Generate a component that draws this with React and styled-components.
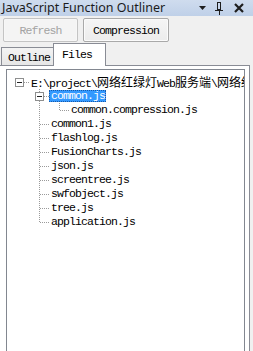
import React from 'react';
import styled, { createGlobalStyle } from 'styled-components';

const MONO = `"Liberation Mono", "Noto Sans CJK SC", monospace`;

const GlobalStyle = createGlobalStyle`
  html, body {
    margin: 0;
    padding: 0;
  }
  body {
    background: #f0f0f0;
    overflow: hidden;
  }
  * {
    box-sizing: border-box;
  }
`;

const Window = styled.div`
  width: 253px;
  height: 351px;
  display: flex;
  flex-direction: column;
  background: #f0f0f0;
  overflow: hidden;
`;

const TitleBar = styled.div`
  height: 16px;
  flex: none;
  display: flex;
  align-items: center;
  padding-left: 2px;
  background: linear-gradient(#cfdcee, #bfd0e8);
  font-family: "Noto Sans", "Open Sans", sans-serif;
  font-size: 12.5px;
  color: #1b1b1b;
`;

const Title = styled.span`
  flex: 1;
  white-space: nowrap;
  line-height: 16px;
`;

const TitleIcons = styled.div`
  display: flex;
  margin-right: 4px;
`;

const TitleIcon = styled.span`
  width: ${(p) => p.$w}px;
  height: 16px;
  display: flex;
  align-items: center;
  justify-content: center;
`;

const Toolbar = styled.div`
  display: flex;
  gap: 5px;
  padding: 2px 3px 0;
  flex: none;
`;

const ToolButton = styled.button`
  width: ${(p) => p.$w}px;
  height: 24px;
  padding: 0;
  border-radius: 2px;
  font-family: ${MONO};
  font-size: 11.5px;
  letter-spacing: -0.9px;
  border: 1px solid ${(p) => (p.disabled ? '#c4c4c4' : '#a9a9a9')};
  background: ${(p) => (p.disabled ? '#f4f4f4' : 'linear-gradient(#f5f5f5, #ececec)')};
  color: ${(p) => (p.disabled ? '#a3a3a3' : '#000')};
  box-shadow: inset 0 0 0 1px ${(p) => (p.disabled ? '#f7f7f7' : '#fbfbfb')};
`;

const TabRow = styled.div`
  display: flex;
  align-items: flex-end;
  height: 23px;
  margin-top: 1px;
  margin-bottom: -1px;
  padding-left: 1px;
  position: relative;
  z-index: 1;
  flex: none;
`;

const Tab = styled.div`
  width: 53px;
  height: ${(p) => (p.$active ? 23 : 18)}px;
  margin-bottom: ${(p) => (p.$active ? 0 : 1)}px;
  margin-left: ${(p) => (p.$active ? -1 : 0)}px;
  padding: ${(p) => (p.$active ? '5px 0 0 8px' : '4px 0 0 6px')};
  border: 1px solid #898c95;
  border-bottom: none;
  background: ${(p) => (p.$active ? '#fff' : 'linear-gradient(#f3f3f3, #e6e6e6)')};
  font-family: ${MONO};
  font-size: 11.5px;
  letter-spacing: -0.9px;
  line-height: 12px;
  color: #000;
  white-space: nowrap;
`;

const TabPanel = styled.div`
  flex: 1;
  width: 250px;
  display: flex;
  background: #fff;
  border-top: 1px solid #898c95;
  border-right: 1px solid #898c95;
  padding: 3px 4px 0 6px;
`;

const TreeBox = styled.div`
  flex: 1;
  border: 1px solid #828790;
  border-bottom: none;
  padding: 5px 0 0 2px;
  overflow: hidden;
  background: #fff;
`;

const Row = styled.div`
  display: flex;
  align-items: center;
  height: 14px;
  white-space: nowrap;
`;

const CellSvg = styled.svg`
  flex: none;
  display: block;
`;

const Label = styled.span`
  height: 12px;
  line-height: 12px;
  padding: 0 1px 0 2px;
  font-family: ${MONO};
  font-size: 11.5px;
  letter-spacing: -0.9px;
  color: ${(p) => (p.$selected ? '#fff' : '#000')};
  background: ${(p) => (p.$selected ? '#3399ff' : 'transparent')};
  outline: ${(p) => (p.$selected ? '1px dotted #1a5aa8' : 'none')};
  outline-offset: -1px;
`;

const Cjk = styled.span`
  font-family: "Noto Sans CJK SC", sans-serif;
  font-size: 12px;
  letter-spacing: 0;
`;

const LINE = '#9a9a9a';

// one 20px column of the tree: guide line, connector and +/- box
const Cell = ({ kind, last, box }) => (
  <CellSvg width="20" height="14" shapeRendering="crispEdges">
    {(kind === 'pass' || kind === 'child') && (
      <line
        x1="10.5"
        y1="0"
        x2="10.5"
        y2={kind === 'child' && last ? 8 : 14}
        stroke={LINE}
        strokeDasharray="1 1"
      />
    )}
    {(kind === 'child' || kind === 'root') && (
      <line x1="11" y1="7.5" x2="20" y2="7.5" stroke={LINE} strokeDasharray="1 1" />
    )}
    {box && (
      <g>
        <rect x="6.5" y="3.5" width="8" height="8" fill="#fff" stroke="#8e8f8f" />
        <line x1="8" y1="7.5" x2="13" y2="7.5" stroke="#222" />
      </g>
    )}
  </CellSvg>
);

const renderText = (text) =>
  text.split(/([\u4e00-\u9fff]+)/).map((part, i) =>
    /[\u4e00-\u9fff]/.test(part) ? <Cjk key={i}>{part}</Cjk> : part
  );

const tree = {
  label: 'E:\\project\\网络红绿灯Web服务端\\网络红绿灯Web服务端',
  children: [
    {
      label: 'common.js',
      selected: true,
      children: [{ label: 'common.compression.js' }],
    },
    { label: 'common1.js' },
    { label: 'flashlog.js' },
    { label: 'FusionCharts.js' },
    { label: 'json.js' },
    { label: 'screentree.js' },
    { label: 'swfobject.js' },
    { label: 'tree.js' },
    { label: 'application.js' },
  ],
};

// guides[k] tells whether column k keeps a vertical line running through the row
const flatten = (node, level, guides, last, out) => {
  out.push({ ...node, level, guides, last });
  (node.children || []).forEach((child, i, arr) =>
    flatten(child, level + 1, [...guides, level === 0 ? false : !last], i === arr.length - 1, out)
  );
  return out;
};

const rows = flatten(tree, 0, [], true, []);

const App = () => (
  <>
    <GlobalStyle />
    <Window>
      <TitleBar>
        <Title>JavaScript Function Outliner</Title>
        <TitleIcons>
          <TitleIcon $w={14}>
            <svg width="7" height="4" viewBox="0 0 7 4">
              <polygon points="0,0 7,0 3.5,4" fill="#1e1e1e" />
            </svg>
          </TitleIcon>
          <TitleIcon $w={20}>
            <svg width="8" height="13" viewBox="0 0 8 13" shapeRendering="crispEdges">
              <rect x="2.5" y="0.5" width="3" height="7" fill="none" stroke="#1e1e1e" />
              <line x1="5" y1="1" x2="5" y2="8" stroke="#1e1e1e" />
              <line x1="0" y1="8.5" x2="8" y2="8.5" stroke="#1e1e1e" />
              <line x1="4" y1="9" x2="4" y2="13" stroke="#1e1e1e" />
            </svg>
          </TitleIcon>
          <TitleIcon $w={20}>
            <svg width="10" height="10" viewBox="0 0 10 10">
              <path d="M1 1 L9 9 M9 1 L1 9" stroke="#1e1e1e" strokeWidth="2.2" />
            </svg>
          </TitleIcon>
        </TitleIcons>
      </TitleBar>

      <Toolbar>
        <ToolButton $w={75} disabled>
          Refresh
        </ToolButton>
        <ToolButton $w={86}>Compression</ToolButton>
      </Toolbar>

      <TabRow>
        <Tab>Outline</Tab>
        <Tab $active>Files</Tab>
      </TabRow>

      <TabPanel>
        <TreeBox>
          {rows.map((row, i) => (
            <Row key={i}>
              {row.guides.map((g, j) => (
                <Cell key={j} kind={g ? 'pass' : 'empty'} />
              ))}
              <Cell
                kind={row.level === 0 ? 'root' : 'child'}
                last={row.last}
                box={!!row.children}
              />
              <Label $selected={row.selected}>{renderText(row.label)}</Label>
            </Row>
          ))}
        </TreeBox>
      </TabPanel>
    </Window>
  </>
);

export default App;
